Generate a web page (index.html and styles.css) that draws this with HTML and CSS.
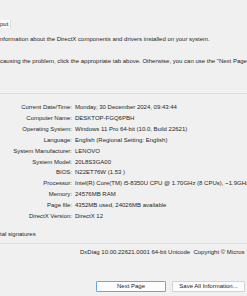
FILE: index.html
```html
<!DOCTYPE html>
<html lang="en">
<head>
  <meta charset="UTF-8">
  <title>DirectX Diagnostic Tool</title>
  <link rel="stylesheet" href="styles.css">
</head>
<body>
  <div class="window">
    <!-- Tab strip (only the end of the last tab is visible) -->
    <div class="tabs">
      <span class="tab">put</span>
    </div>

    <section class="page">
      <p class="intro first">nformation about the DirectX components and drivers installed on your system.</p>
      <p class="intro">causing the problem, click the appropriate tab above. Otherwise, you can use the "Next Page"</p>

      <div class="group">
        <div class="info">
          <span class="label">Current Date/Time:</span><span class="value">Monday, 30 December 2024, 09:43:44</span>
          <span class="label">Computer Name:</span><span class="value">DESKTOP-FGQ6PBH</span>
          <span class="label">Operating System:</span><span class="value">Windows 11 Pro 64-bit (10.0, Build 22621)</span>
          <span class="label">Language:</span><span class="value">English (Regional Setting: English)</span>
          <span class="label">System Manufacturer:</span><span class="value">LENOVO</span>
          <span class="label">System Model:</span><span class="value">20L8S3GA00</span>
          <span class="label">BIOS:</span><span class="value">N22ET76W (1.53 )</span>
          <span class="label">Processor:</span><span class="value">Intel(R) Core(TM) i5-8350U CPU @ 1.70GHz (8 CPUs), ~1.9GHz</span>
          <span class="label">Memory:</span><span class="value">24576MB RAM</span>
          <span class="label">Page file:</span><span class="value">4352MB used, 24026MB available</span>
          <span class="label">DirectX Version:</span><span class="value">DirectX 12</span>
        </div>
      </div>

      <div class="check">tal signatures</div>

      <div class="group footer">
        <p class="version">DxDiag 10.00.22621.0001 64-bit Unicode&nbsp; Copyright © Micros</p>
      </div>
    </section>

    <div class="buttons">
      <button class="btn default">Next Page</button>
      <button class="btn">Save All Information...</button>
    </div>
  </div>
</body>
</html>
```

FILE: styles.css
```css
html, body {
  margin: 0;
  padding: 0;
}
body {
  background: #f0f0f0;
  font-family: "Liberation Sans", Arial, sans-serif;
  font-size: 6px;
  color: #262626;
  overflow: hidden;
}
.window {
  width: 247px;
  height: 296px;
  overflow: hidden;
}
.tabs {
  padding-top: 20px;
  height: 8px;
  display: flex;
}
.tab {
  display: block;
  height: 8px;
  line-height: 8px;
  padding-right: 2px;
  background: #fbfbfb;
  border-right: 1px solid #dcdcdc;
}
.page {
  white-space: nowrap;
}
.intro {
  margin: 0;
  height: 10px;
  line-height: 10px;
  margin-top: 12px;
}
.intro.first {
  margin-top: 6px;
}
.group {
  border-top: 1px solid #dedede;
  margin-top: 27px;
  padding-top: 8px;
}
.info {
  display: grid;
  grid-template-columns: 72px auto;
  column-gap: 3px;
  line-height: 10.9px;
}
.label {
  text-align: right;
}
.check {
  height: 10px;
  line-height: 10px;
  margin-top: 7px;
}
.group.footer {
  margin-top: 4px;
  padding-top: 3px;
}
.version {
  margin: 0 0 0 80px;
  height: 10px;
  line-height: 10px;
}
.buttons {
  display: flex;
  gap: 6px;
  margin-top: 24px;
  padding-left: 96px;
}
.btn {
  height: 11px;
  padding: 0;
  font-family: inherit;
  font-size: 6px;
  color: #222;
  background: #fcfcfc;
  border: 1px solid #d3d3d3;
  border-radius: 1px;
  width: 73px;
}
.btn.default {
  width: 70px;
  border-color: #6aa8de;
}
```
